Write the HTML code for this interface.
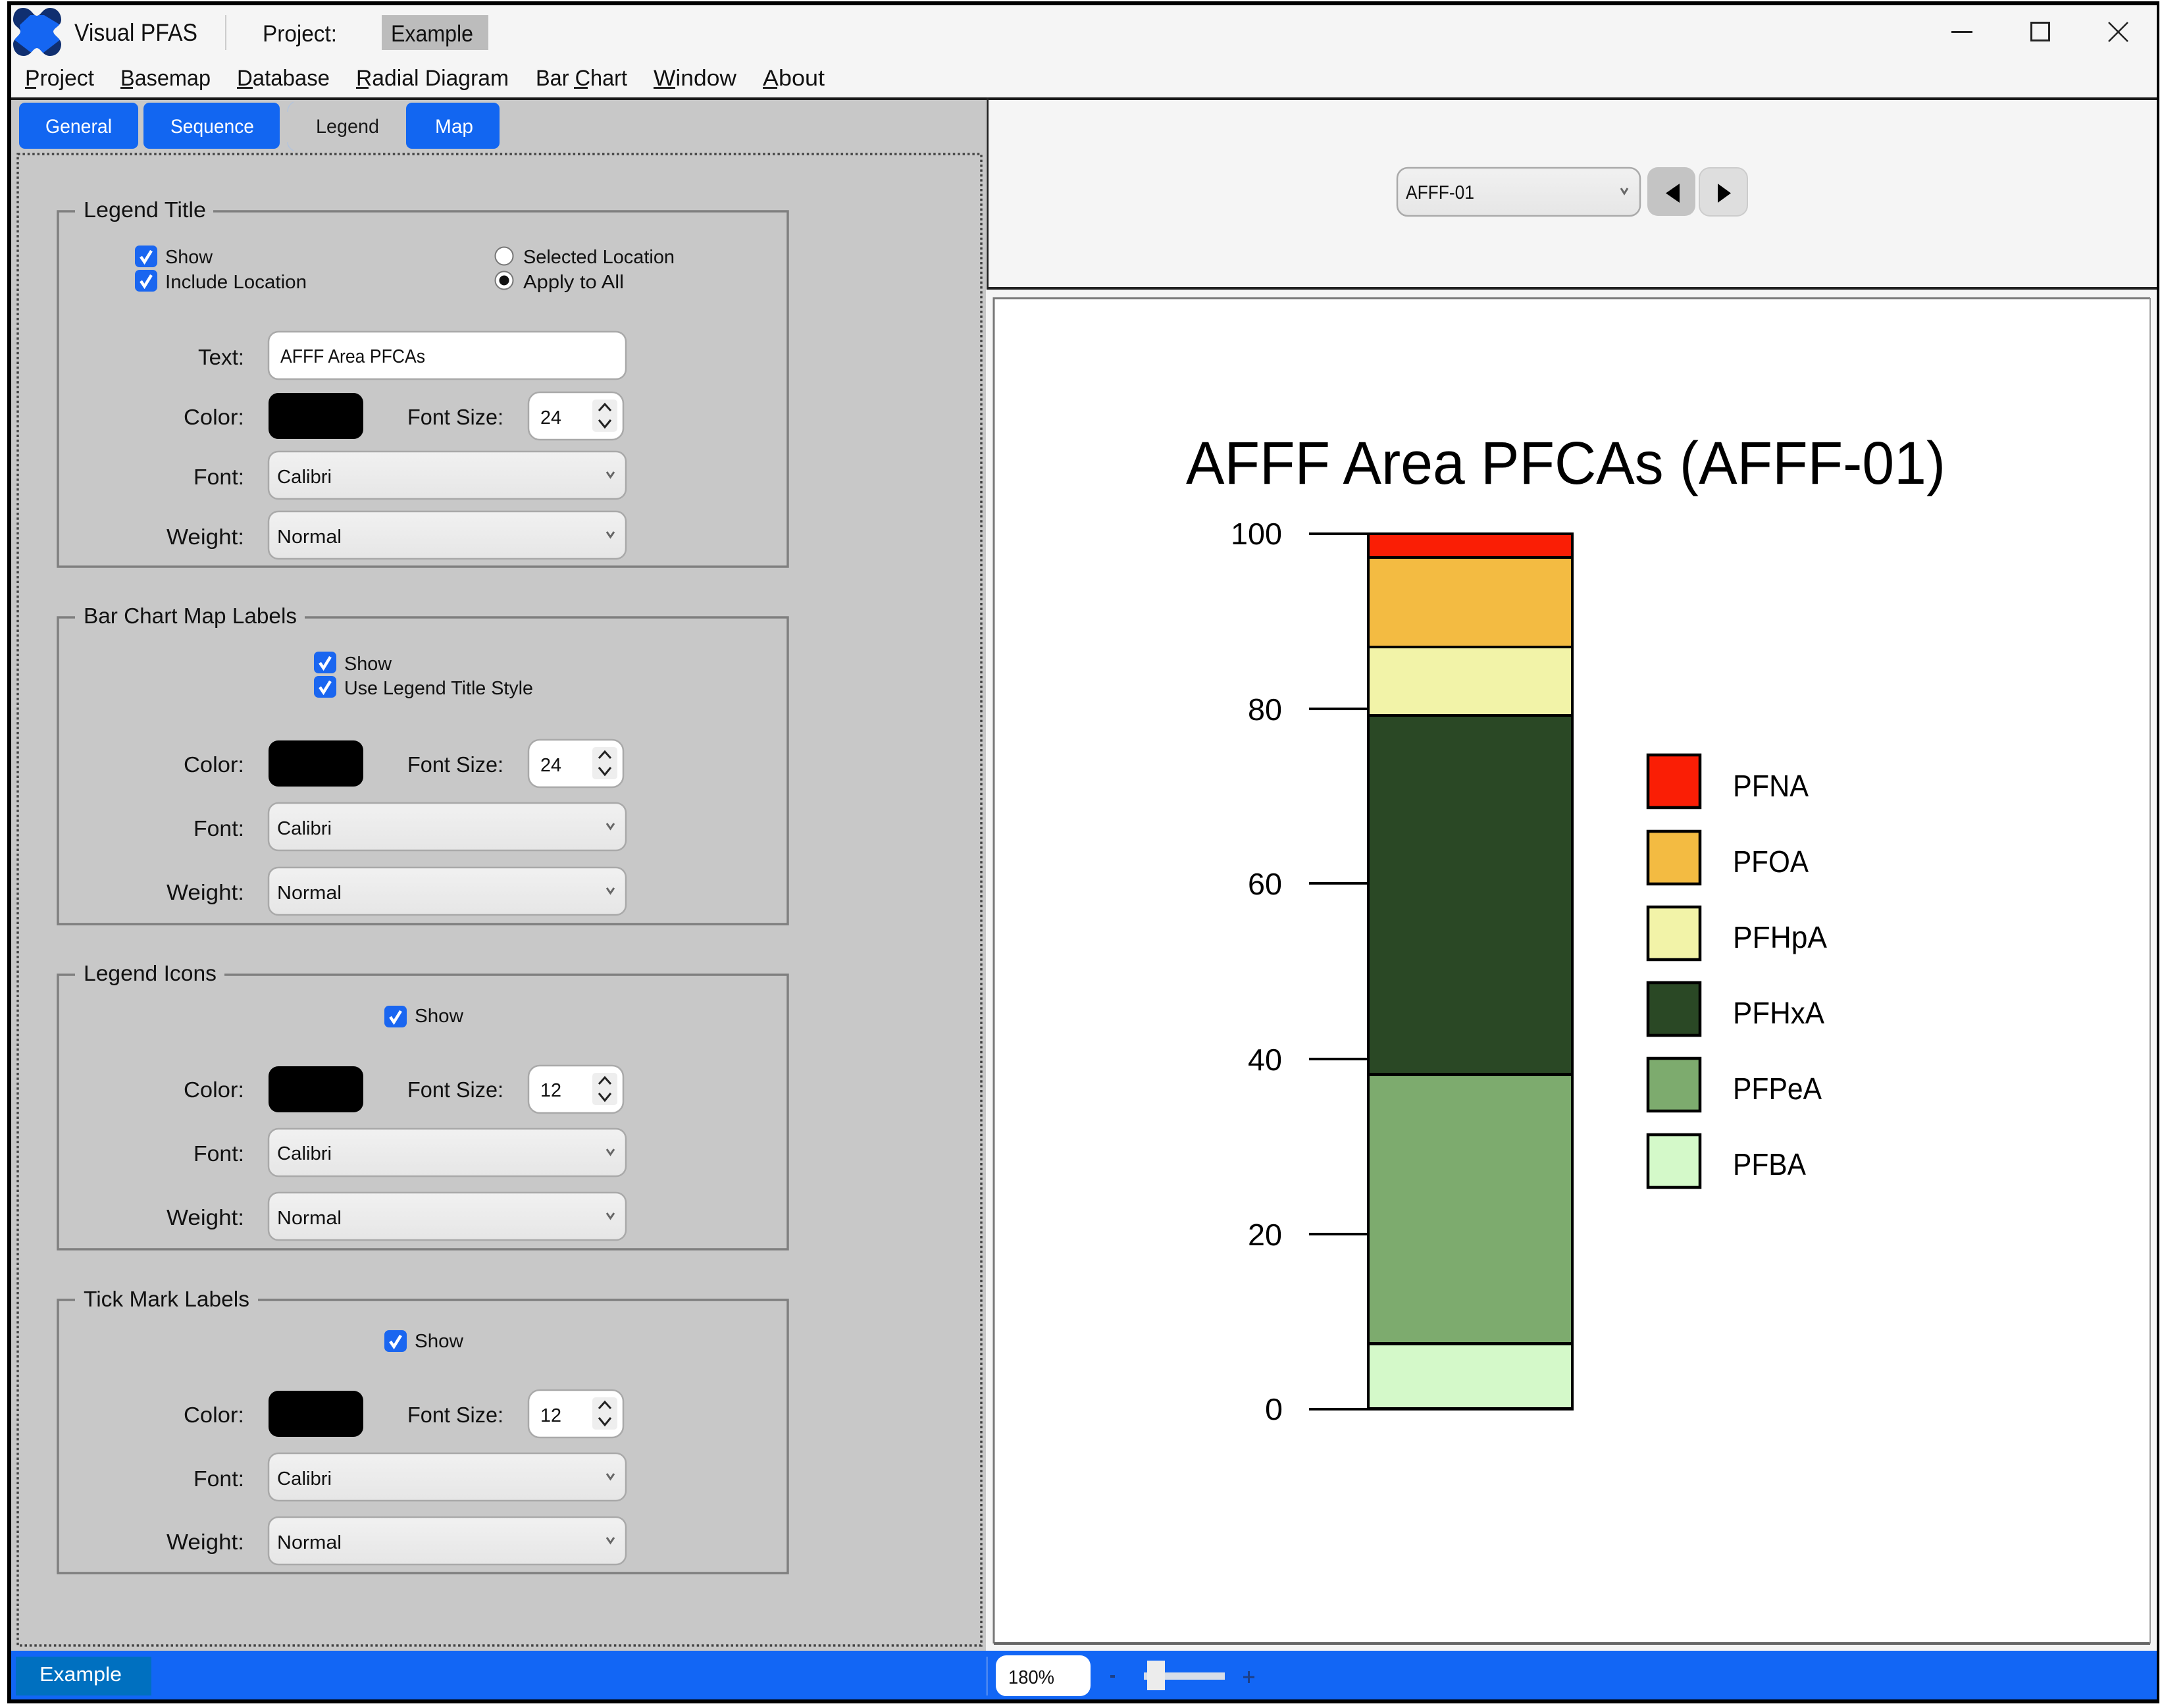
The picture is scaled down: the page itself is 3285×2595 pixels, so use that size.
<!DOCTYPE html>
<html lang="en">
<head>
<meta charset="utf-8">
<title>Visual PFAS</title>
<style>
html,body{margin:0;padding:0;background:#fff;width:3285px;height:2595px;overflow:hidden}
svg{display:block}
text{font-family:"Liberation Sans",Arial,sans-serif;fill:#111}
.t{font-size:37px}.m{font-size:34px}.tab{font-size:30px;fill:#fff}.tabd{font-size:30px;fill:#1a1a1a}
.g{font-size:33px}.l{font-size:33px}.s{font-size:29px}.v{font-size:29px}
.tk{font-size:46px;fill:#000}.lg{font-size:46px;fill:#000}
</style>
</head>
<body>
<svg xmlns="http://www.w3.org/2000/svg" width="3285" height="2595" viewBox="0 0 3285 2595">
<defs>
<linearGradient id="gr" x1="0" y1="0" x2="0" y2="1"><stop offset="0" stop-color="#f1f1f1"/><stop offset="1" stop-color="#e6e6e6"/></linearGradient>
<clipPath id="lc"><path d="M56 24C50 24 48 12 35 12C25 12 20 20 20 30C20 40 31 42 31 48C31 54 20 58 20 67C20 77 26 85 36 85C47 85 50 73 56 73C62 73 65 85 76 85C86 85 93 77 93 67C93 58 81 54 81 48C81 42 93 40 93 30C93 20 86 12 76 12C65 12 62 24 56 24Z"/></clipPath>
<g id="chk"><rect x="0" y="0" width="34" height="33" rx="7" fill="#1a66f0"/><path d="M9 17L14.5 25L25 8" fill="none" stroke="#fff" stroke-width="4.5"/></g>
<g id="dd"><rect x="0" y="0" width="543" height="72" rx="15" fill="url(#gr)" stroke="#a9a9a9" stroke-width="2.5"/><path d="M514 31L519.500 39L525 31" fill="none" stroke="#666" stroke-width="3"/></g>
<g id="sw"><rect x="0" y="0" width="144" height="70" rx="15" fill="#000"/></g>
<g id="sp"><rect x="0" y="0" width="144" height="72" rx="17" fill="#fff" stroke="#a9a9a9" stroke-width="2.5"/><rect x="97" y="11" width="38" height="49" rx="5" fill="#eee"/><path d="M107 28L116 18L125 28M107 42L116 53L125 42" fill="none" stroke="#222" stroke-width="3"/></g>
</defs>

<!-- window -->
<rect x="0" y="0" width="3285" height="2595" fill="#fff"/>
<rect x="11" y="2" width="3270" height="2586" fill="#000"/>
<rect x="17" y="8" width="3260" height="2574" fill="#f5f5f5"/>

<!-- logo -->
<g clip-path="url(#lc)"><rect x="15" y="8" width="85" height="82" fill="#102f70"/><path d="M46 23L67 23L92 38L81 48L92 60L66 80L46 79L20 59L31 48L30 38Z" fill="#1566f2"/></g>
<text x="113" y="62" class="t" textLength="187" lengthAdjust="spacingAndGlyphs">Visual PFAS</text>
<rect x="342" y="23" width="2" height="53" fill="#ccc"/>
<text x="399" y="63" class="t" textLength="113" lengthAdjust="spacingAndGlyphs" style="font-size:35px">Project:</text>
<rect x="580" y="23" width="162" height="53" fill="#bcbcbc"/>
<text x="594" y="63" class="t" textLength="125" lengthAdjust="spacingAndGlyphs" style="font-size:35px">Example</text>

<!-- window controls -->
<rect x="2965" y="47" width="32" height="3" fill="#222"/>
<rect x="3086.500" y="34.500" width="27" height="27" fill="none" stroke="#222" stroke-width="3"/>
<path d="M3204 34L3233 63M3233 34L3204 63" stroke="#222" stroke-width="2.500" fill="none"/>

<!-- menu -->
<text x="38" y="130" class="m" textLength="105" lengthAdjust="spacingAndGlyphs">Project</text><rect x="38" y="132" width="17" height="3" fill="#222"/>
<text x="183" y="130" class="m" textLength="137" lengthAdjust="spacingAndGlyphs">Basemap</text><rect x="183" y="132" width="19" height="3" fill="#222"/>
<text x="360" y="130" class="m" textLength="141" lengthAdjust="spacingAndGlyphs">Database</text><rect x="360" y="132" width="24" height="3" fill="#222"/>
<text x="541" y="130" class="m" textLength="232" lengthAdjust="spacingAndGlyphs">Radial Diagram</text><rect x="541" y="132" width="19" height="3" fill="#222"/>
<text x="814" y="130" class="m" textLength="139" lengthAdjust="spacingAndGlyphs">Bar Chart</text><rect x="872" y="132" width="21" height="3" fill="#222"/>
<text x="993" y="130" class="m" textLength="126" lengthAdjust="spacingAndGlyphs">Window</text><rect x="993" y="132" width="33" height="3" fill="#222"/>
<text x="1159" y="130" class="m" textLength="94" lengthAdjust="spacingAndGlyphs">About</text><rect x="1159" y="132" width="22" height="3" fill="#222"/>

<!-- header line -->
<rect x="17" y="148" width="3260" height="4" fill="#1a1a1a"/>

<!-- left panel -->
<rect x="17" y="152" width="1481" height="2356" fill="#c8c8c8"/>
<rect x="29" y="156" width="181" height="70" rx="9" fill="#1266f1"/>
<rect x="218" y="156" width="207" height="70" rx="9" fill="#1266f1"/>
<rect x="617" y="156" width="142" height="70" rx="9" fill="#1266f1"/>
<path d="M446 155Q437 160 437 170M437 216Q437 224 446 229" fill="none" stroke="#b4c4dc" stroke-width="1.500"/>
<text x="69" y="202" class="tab" textLength="101" lengthAdjust="spacingAndGlyphs">General</text>
<text x="259" y="202" class="tab" textLength="127" lengthAdjust="spacingAndGlyphs">Sequence</text>
<text x="480" y="202" class="tabd" textLength="96" lengthAdjust="spacingAndGlyphs">Legend</text>
<text x="661" y="202" class="tab" textLength="58" lengthAdjust="spacingAndGlyphs">Map</text>
<rect x="27" y="234" width="1464" height="2266" fill="none" stroke="#444" stroke-width="3.500" stroke-dasharray="3.500 3.900"/>

<!-- group outlines -->
<g fill="none" stroke="#7f7f7f" stroke-width="3.500">
<path d="M114 321H88V861H1197V321H324"/>
<path d="M114 938H88V1404H1197V938H463"/>
<path d="M114 1481H88V1898H1197V1481H341"/>
<path d="M114 1975H88V2390H1197V1975H392"/>
</g>
<text x="127" y="330" class="g" textLength="186" lengthAdjust="spacingAndGlyphs">Legend Title</text>
<text x="127" y="947" class="g" textLength="324" lengthAdjust="spacingAndGlyphs">Bar Chart Map Labels</text>
<text x="127" y="1490" class="g" textLength="202" lengthAdjust="spacingAndGlyphs">Legend Icons</text>
<text x="127" y="1985" class="g" textLength="252" lengthAdjust="spacingAndGlyphs">Tick Mark Labels</text>

<!-- group 1 -->
<use href="#chk" x="205" y="373"/><use href="#chk" x="205" y="410"/>
<text x="251" y="400" class="s" textLength="72" lengthAdjust="spacingAndGlyphs">Show</text>
<text x="251" y="438" class="s" textLength="215" lengthAdjust="spacingAndGlyphs">Include Location</text>
<circle cx="766" cy="389" r="13.500" fill="#fff" stroke="#777" stroke-width="2"/>
<circle cx="766" cy="426" r="13.500" fill="#fff" stroke="#777" stroke-width="2"/>
<circle cx="766" cy="426" r="7.500" fill="#111"/>
<text x="795" y="400" class="s" textLength="230" lengthAdjust="spacingAndGlyphs">Selected Location</text>
<text x="795" y="438" class="s" textLength="153" lengthAdjust="spacingAndGlyphs">Apply to All</text>
<text x="301" y="554" class="l" textLength="70" lengthAdjust="spacingAndGlyphs">Text:</text>
<rect x="408" y="504" width="543" height="72" rx="15" fill="#fff" stroke="#a9a9a9" stroke-width="2.500"/>
<text x="426" y="551" class="v" textLength="220" lengthAdjust="spacingAndGlyphs">AFFF Area PFCAs</text>
<text x="279" y="645" class="l" textLength="92" lengthAdjust="spacingAndGlyphs">Color:</text>
<use href="#sw" x="408" y="597"/>
<text x="619" y="645" class="l" textLength="146" lengthAdjust="spacingAndGlyphs">Font Size:</text>
<use href="#sp" x="803" y="596"/>
<text x="821" y="644" class="v" textLength="32" lengthAdjust="spacingAndGlyphs">24</text>
<text x="294" y="736" class="l" textLength="77" lengthAdjust="spacingAndGlyphs">Font:</text>
<use href="#dd" x="408" y="686"/>
<text x="421" y="734" class="v" textLength="83" lengthAdjust="spacingAndGlyphs">Calibri</text>
<text x="253" y="827" class="l" textLength="118" lengthAdjust="spacingAndGlyphs">Weight:</text>
<use href="#dd" x="408" y="777"/>
<text x="421" y="825" class="v" textLength="98" lengthAdjust="spacingAndGlyphs">Normal</text>

<!-- group 2 -->
<use href="#chk" x="477" y="990"/><use href="#chk" x="477" y="1027"/>
<text x="523" y="1018" class="s" textLength="72" lengthAdjust="spacingAndGlyphs">Show</text>
<text x="523" y="1055" class="s" textLength="287" lengthAdjust="spacingAndGlyphs">Use Legend Title Style</text>
<text x="279" y="1173" class="l" textLength="92" lengthAdjust="spacingAndGlyphs">Color:</text>
<use href="#sw" x="408" y="1125"/>
<text x="619" y="1173" class="l" textLength="146" lengthAdjust="spacingAndGlyphs">Font Size:</text>
<use href="#sp" x="803" y="1124"/>
<text x="821" y="1172" class="v" textLength="32" lengthAdjust="spacingAndGlyphs">24</text>
<text x="294" y="1270" class="l" textLength="77" lengthAdjust="spacingAndGlyphs">Font:</text>
<use href="#dd" x="408" y="1220"/>
<text x="421" y="1268" class="v" textLength="83" lengthAdjust="spacingAndGlyphs">Calibri</text>
<text x="253" y="1367" class="l" textLength="118" lengthAdjust="spacingAndGlyphs">Weight:</text>
<use href="#dd" x="408" y="1318"/>
<text x="421" y="1366" class="v" textLength="98" lengthAdjust="spacingAndGlyphs">Normal</text>

<!-- group 3 -->
<use href="#chk" x="584" y="1528"/>
<text x="630" y="1553" class="s" textLength="74" lengthAdjust="spacingAndGlyphs">Show</text>
<text x="279" y="1667" class="l" textLength="92" lengthAdjust="spacingAndGlyphs">Color:</text>
<use href="#sw" x="408" y="1620"/>
<text x="619" y="1667" class="l" textLength="146" lengthAdjust="spacingAndGlyphs">Font Size:</text>
<use href="#sp" x="803" y="1619"/>
<text x="821" y="1666" class="v" textLength="32" lengthAdjust="spacingAndGlyphs">12</text>
<text x="294" y="1764" class="l" textLength="77" lengthAdjust="spacingAndGlyphs">Font:</text>
<use href="#dd" x="408" y="1715"/>
<text x="421" y="1762" class="v" textLength="83" lengthAdjust="spacingAndGlyphs">Calibri</text>
<text x="253" y="1861" class="l" textLength="118" lengthAdjust="spacingAndGlyphs">Weight:</text>
<use href="#dd" x="408" y="1812"/>
<text x="421" y="1860" class="v" textLength="98" lengthAdjust="spacingAndGlyphs">Normal</text>

<!-- group 4 -->
<use href="#chk" x="584" y="2021"/>
<text x="630" y="2047" class="s" textLength="74" lengthAdjust="spacingAndGlyphs">Show</text>
<text x="279" y="2161" class="l" textLength="92" lengthAdjust="spacingAndGlyphs">Color:</text>
<use href="#sw" x="408" y="2113"/>
<text x="619" y="2161" class="l" textLength="146" lengthAdjust="spacingAndGlyphs">Font Size:</text>
<use href="#sp" x="803" y="2112"/>
<text x="821" y="2160" class="v" textLength="32" lengthAdjust="spacingAndGlyphs">12</text>
<text x="294" y="2258" class="l" textLength="77" lengthAdjust="spacingAndGlyphs">Font:</text>
<use href="#dd" x="408" y="2208"/>
<text x="421" y="2256" class="v" textLength="83" lengthAdjust="spacingAndGlyphs">Calibri</text>
<text x="253" y="2354" class="l" textLength="118" lengthAdjust="spacingAndGlyphs">Weight:</text>
<use href="#dd" x="408" y="2305"/>
<text x="421" y="2353" class="v" textLength="98" lengthAdjust="spacingAndGlyphs">Normal</text>

<!-- right top panel -->
<rect x="1499" y="148" width="3" height="291" fill="#222"/>
<rect x="1499" y="436" width="1778" height="4" fill="#222"/>
<rect x="2123" y="255" width="369" height="73" rx="16" fill="url(#gr)" stroke="#aaa" stroke-width="2.500"/>
<text x="2136" y="302" class="v" textLength="104" lengthAdjust="spacingAndGlyphs">AFFF-01</text>
<path d="M2463 286L2468 294L2473 286" fill="none" stroke="#666" stroke-width="3"/>
<rect x="2503" y="254" width="73" height="74" rx="16" fill="#c4c4c4"/>
<rect x="2582" y="255" width="73" height="73" rx="16" fill="#dedede" stroke="#ccc" stroke-width="2"/>
<path d="M2552 279V308L2531 293.500Z" fill="#000"/>
<path d="M2610 279V308L2630 293.500Z" fill="#000"/>

<!-- chart box -->
<rect x="1510" y="453" width="1757" height="2044" fill="#fff"/>
<path d="M1510 2497V453H3267" fill="none" stroke="#777" stroke-width="3"/>
<path d="M1510 2497H3267" fill="none" stroke="#666" stroke-width="4"/>
<path d="M3267 453V2497" fill="none" stroke="#999" stroke-width="2"/>

<text x="1802" y="735" style="font-size:92px;fill:#000" textLength="1154" lengthAdjust="spacingAndGlyphs">AFFF Area PFCAs (AFFF-01)</text>

<!-- ticks -->
<g fill="#000">
<rect x="1989" y="809" width="89" height="4"/>
<rect x="1989" y="1075" width="89" height="4"/>
<rect x="1989" y="1340" width="89" height="4"/>
<rect x="1989" y="1607" width="89" height="4"/>
<rect x="1989" y="1873" width="89" height="4"/>
<rect x="1989" y="2139" width="89" height="4"/>
</g>
<text x="1870" y="827" class="tk" textLength="78" lengthAdjust="spacingAndGlyphs">100</text>
<text x="1896" y="1094" class="tk" textLength="52" lengthAdjust="spacingAndGlyphs">80</text>
<text x="1896" y="1359" class="tk" textLength="52" lengthAdjust="spacingAndGlyphs">60</text>
<text x="1896" y="1626" class="tk" textLength="52" lengthAdjust="spacingAndGlyphs">40</text>
<text x="1896" y="1892" class="tk" textLength="52" lengthAdjust="spacingAndGlyphs">20</text>
<text x="1922" y="2157" class="tk" textLength="27" lengthAdjust="spacingAndGlyphs">0</text>

<!-- bar -->
<rect x="2077" y="809" width="314" height="1334" fill="#000"/>
<rect x="2081" y="813" width="306" height="32" fill="#fa1e05"/>
<rect x="2081" y="849" width="306" height="132" fill="#f3bb42"/>
<rect x="2081" y="985" width="306" height="100" fill="#f2f3a8"/>
<rect x="2081" y="1089" width="306" height="541" fill="#2a4825"/>
<rect x="2081" y="1635" width="306" height="404" fill="#7dab6e"/>
<rect x="2081" y="2044" width="306" height="94" fill="#d4f9c9"/>

<!-- legend -->
<g stroke="#000" stroke-width="4.500">
<rect x="2504" y="1147" width="79" height="80" fill="#fa1e05"/>
<rect x="2504" y="1263" width="79" height="80" fill="#f3bb42"/>
<rect x="2504" y="1378" width="79" height="80" fill="#f2f3a8"/>
<rect x="2504" y="1493" width="79" height="80" fill="#2a4825"/>
<rect x="2504" y="1608" width="79" height="80" fill="#7dab6e"/>
<rect x="2504" y="1724" width="79" height="80" fill="#d4f9c9"/>
</g>
<text x="2633" y="1210" class="lg" textLength="115" lengthAdjust="spacingAndGlyphs">PFNA</text>
<text x="2633" y="1325" class="lg" textLength="115" lengthAdjust="spacingAndGlyphs">PFOA</text>
<text x="2633" y="1440" class="lg" textLength="143" lengthAdjust="spacingAndGlyphs">PFHpA</text>
<text x="2633" y="1555" class="lg" textLength="139" lengthAdjust="spacingAndGlyphs">PFHxA</text>
<text x="2633" y="1670" class="lg" textLength="135" lengthAdjust="spacingAndGlyphs">PFPeA</text>
<text x="2633" y="1785" class="lg" textLength="111" lengthAdjust="spacingAndGlyphs">PFBA</text>

<!-- status bar -->
<rect x="17" y="2508" width="3260" height="74" fill="#1266f5"/>
<rect x="24" y="2517" width="206" height="59" fill="#0070c0"/>
<text x="60" y="2554" style="font-size:31px;fill:#fff" textLength="125" lengthAdjust="spacingAndGlyphs">Example</text>
<rect x="1499" y="2517" width="1.500" height="59" fill="#7ea6ee"/>
<rect x="1513" y="2515" width="144" height="62" rx="16" fill="#fff"/>
<text x="1532" y="2558" class="v" textLength="70" lengthAdjust="spacingAndGlyphs">180%</text>
<rect x="1687" y="2545" width="7" height="4" fill="#1c3f86"/>
<rect x="1738" y="2541" width="123" height="11" fill="#d6dde8"/>
<rect x="1743" y="2523" width="27" height="45" fill="#ececec"/>
<path d="M1889 2548H1906M1897.500 2539V2557" stroke="#1c3f86" stroke-width="3" fill="none"/>
</svg>
</body>
</html>
